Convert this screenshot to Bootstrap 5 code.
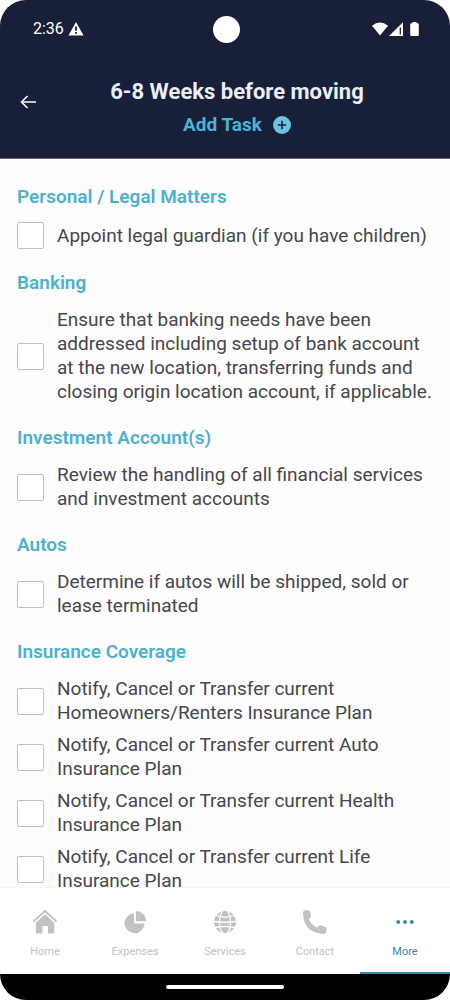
<!DOCTYPE html>
<html lang="en">
<head>
<meta charset="utf-8">
<meta name="viewport" content="width=device-width, initial-scale=1">
<title>6-8 Weeks before moving</title>
<link href="https://cdn.jsdelivr.net/npm/bootstrap@5.3.0/dist/css/bootstrap.min.css" rel="stylesheet">
<style>
  body { font-family: Roboto, "Liberation Sans", sans-serif; background: #fff; color: #47464b; }
  .device { border-radius: 26px; background: #fdfdfe; }
  .app-header { background: #181f38; color: #e9eefb; border-bottom: 1px solid #5b6676; }
  .status-bar { height: 58px; padding: 0 30px 0 33px; font-size: 16px; color: #fff; }
  .camera { width: 27px; height: 27px; background: #fff; }
  .title-bar { height: 100px; padding: 0 20px; }
  .title-bar h1 { font-size: 22px; line-height: 26px; font-weight: 700; }
  .back-btn { width: 16px; color: #fff; line-height: 0; margin-top: 37px; }
  .title-stack { padding: 21px 0 0 8px; }
  .add-btn { font-size: 19px; line-height: 24px; font-weight: 700; color: #4cb3d4; gap: 11px; }
  .task-list { padding: 26px 16px 0 17px; min-height: 0; }
  .task-list h2 { font-size: 19px; line-height: 24px; font-weight: 600; color: #4cb0d0; margin: 0 0 13px; }
  .task-group { margin-bottom: 22px; }
  .task { gap: 13px; min-height: 27px; font-size: 19px; line-height: 24px; }
  .task .form-check-input { width: 27px; height: 27px; border: 1px solid #bfbec8; border-radius: 2px; }
  .tab-bar { height: 87px; background: #fff; border-top: 1px solid #f6f5f9; }
  .tab-bar a { color: #c2c2c2; font-size: 11px; line-height: 16px; padding-top: 20px; gap: 8px; border-bottom: 2px solid transparent; }
  .tab-bar a.active { color: #3787a2; border-color: #3787a2; }
  .gesture-bar { height: 26px; background: #000; }
  .gesture-bar span { width: 118px; height: 4px; background: #fff; }
</style>
</head>
<body>
<div class="device vh-100 d-flex flex-column overflow-hidden">
  <header class="app-header flex-shrink-0">
    <div class="status-bar row g-0 align-items-center">
      <div class="col d-flex align-items-center gap-1">
        <span>2:36</span>
        <svg width="16" height="14" viewBox="0 0 16 14" aria-hidden="true"><path fill="#fff" d="M8 0 15.600 13.500H.4z"/><path stroke="#181f38" stroke-width="1.800" d="M8 4.500v4.300M8 10v1.800"/></svg>
      </div>
      <div class="camera col-auto rounded-circle"></div>
      <div class="col d-flex align-items-center justify-content-end">
        <svg width="48" height="15" viewBox="0 0 48 15" fill="#fff" aria-hidden="true"><path d="M0 3.800Q8-2.600 16 3.800L8 13.500z"/><path d="M17 14 31 .3V14z"/><path d="M28.300 5.500v7" stroke="#181f38" stroke-width="1.300" fill="none"/><path d="M40.500 0h4v1.300h1.300q1 0 1 1V13q0 1-1 1h-6.600q-1 0-1-1V2.300q0-1 1-1h1.300z"/></svg>
      </div>
    </div>
    <div class="title-bar d-flex align-items-start">
      <button type="button" class="back-btn btn p-0 border-0" aria-label="Back">
        <svg width="16" height="14" viewBox="0 0 16 14" fill="none" stroke="#fff" stroke-width="1.600" aria-hidden="true"><path d="M16 7H1.500M7.500 1l-6 6 6 6"/></svg>
      </button>
      <div class="title-stack flex-grow-1 d-flex flex-column align-items-center">
        <h1 class="mb-2 text-nowrap">6-8 Weeks before moving</h1>
        <button type="button" class="add-btn btn p-0 border-0 d-flex align-items-center">Add Task
          <svg width="18" height="18" viewBox="0 0 18 18" aria-hidden="true"><circle cx="9" cy="9" r="9" fill="#6cc3df"/><path d="M9 4.800v8.400M4.800 9h8.400" stroke="#181f38" stroke-width="1.600"/></svg>
        </button>
      </div>
    </div>
  </header>

  <main class="task-list flex-grow-1 overflow-hidden">
    <section class="task-group">
      <h2>Personal / Legal Matters</h2>
      <div class="task d-flex align-items-center"><input class="form-check-input flex-shrink-0 m-0" type="checkbox" id="t1"><label for="t1">Appoint legal guardian (if you have children)</label></div>
    </section>
    <section class="task-group">
      <h2>Banking</h2>
      <div class="task d-flex align-items-center"><input class="form-check-input flex-shrink-0 m-0" type="checkbox" id="t2"><label for="t2">Ensure that banking needs have been addressed including setup of bank account at the new location, transferring funds and closing origin location account, if applicable.</label></div>
    </section>
    <section class="task-group">
      <h2>Investment Account(s)</h2>
      <div class="task d-flex align-items-center"><input class="form-check-input flex-shrink-0 m-0" type="checkbox" id="t3"><label for="t3">Review the handling of all financial services and investment accounts</label></div>
    </section>
    <section class="task-group">
      <h2>Autos</h2>
      <div class="task d-flex align-items-center"><input class="form-check-input flex-shrink-0 m-0" type="checkbox" id="t4"><label for="t4">Determine if autos will be shipped, sold or lease terminated</label></div>
    </section>
    <section class="task-group">
      <h2>Insurance Coverage</h2>
      <div class="d-flex flex-column gap-2">
        <div class="task d-flex align-items-center"><input class="form-check-input flex-shrink-0 m-0" type="checkbox" id="t5"><label for="t5">Notify, Cancel or Transfer current Homeowners/Renters Insurance Plan</label></div>
        <div class="task d-flex align-items-center"><input class="form-check-input flex-shrink-0 m-0" type="checkbox" id="t6"><label for="t6">Notify, Cancel or Transfer current Auto Insurance Plan</label></div>
        <div class="task d-flex align-items-center"><input class="form-check-input flex-shrink-0 m-0" type="checkbox" id="t7"><label for="t7">Notify, Cancel or Transfer current Health Insurance Plan</label></div>
        <div class="task d-flex align-items-center"><input class="form-check-input flex-shrink-0 m-0" type="checkbox" id="t8"><label for="t8">Notify, Cancel or Transfer current Life Insurance Plan</label></div>
      </div>
    </section>
  </main>

  <nav class="tab-bar row g-0 flex-shrink-0" aria-label="Main">
    <a href="#" class="col d-flex flex-column align-items-center text-decoration-none">
      <svg width="26" height="28" viewBox="0 0 26 28" aria-hidden="true"><path d="M1.500 13.500 13 3 24.500 13.500" fill="none" stroke="currentColor" stroke-width="1.800"/><path fill="currentColor" d="M13 6.200l9.300 8.600V24q0 1.500-1.500 1.500H16V18h-5.500v7.500H5.300q-1.500 0-1.500-1.500v-9.200z"/></svg>
      Home</a>
    <a href="#" class="col d-flex flex-column align-items-center text-decoration-none">
      <svg width="24" height="28" viewBox="0 0 24 28" fill="currentColor" aria-hidden="true"><path d="M11 5.200V15.500h10.500A10 10 0 1 1 11 5.200z"/><path d="M13 3a10.300 10.300 0 0 1 10.300 10.300H13z"/></svg>
      Expenses</a>
    <a href="#" class="col d-flex flex-column align-items-center text-decoration-none">
      <svg width="24" height="28" viewBox="0 0 24 28" aria-hidden="true"><circle cx="12" cy="14" r="11" fill="currentColor"/><g fill="none" stroke="#fff" stroke-width="1.300"><ellipse cx="12" cy="14" rx="5.500" ry="12.500"/><path d="M3 7.500Q12 11 21 7.500M.5 13.500Q12 15 23.500 13.500M2 19.500Q12 17.500 22 19.500"/></g></svg>
      Services</a>
    <a href="#" class="col d-flex flex-column align-items-center text-decoration-none">
      <svg width="26" height="28" viewBox="0 0 26 28" fill="currentColor" aria-hidden="true"><path d="M1 4.500Q1 2.500 3 2.300L6 2Q7.500 2 8 3.500L9 8Q9.200 9.200 8.200 10L6.600 11.300Q9.500 17 15 19.700L16.600 17.800Q17.500 16.800 18.700 17.300L23.500 19Q25 19.500 24.800 21L24 24.300Q23.500 26 21.500 26 1 24.500 1 4.500z"/></svg>
      Contact</a>
    <a href="#" class="active col d-flex flex-column align-items-center text-decoration-none" aria-current="page">
      <svg width="20" height="28" viewBox="0 0 20 28" fill="currentColor" aria-hidden="true"><circle cx="3.200" cy="14" r="1.900"/><circle cx="10" cy="14" r="1.900"/><circle cx="16.800" cy="14" r="1.900"/></svg>
      More</a>
  </nav>
  <div class="gesture-bar flex-shrink-0 d-flex align-items-center justify-content-center"><span class="rounded-pill"></span></div>
</div>
<script src="https://cdn.jsdelivr.net/npm/bootstrap@5.3.0/dist/js/bootstrap.bundle.min.js"></script>
</body>
</html>
